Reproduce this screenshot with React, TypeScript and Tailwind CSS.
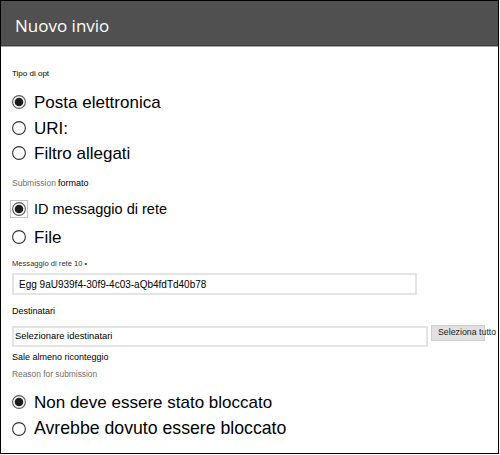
import React from "react";

const Radio: React.FC<{ checked?: boolean; focus?: boolean }> = ({ checked, focus }) => (
  <span
    className={
      "relative flex h-[14px] w-[14px] shrink-0 items-center justify-center " +
      (focus ? "outline outline-1 outline-[#c4c4c4] outline-offset-1" : "")
    }
  >
    <svg width="14" height="14" viewBox="0 0 14 14">
      <circle cx="7" cy="7" r="6.4" fill="#fff" stroke={checked ? "#5a5a5a" : "#333"} strokeWidth="1.1" />
      {checked && <circle cx="7" cy="7" r="4.3" fill="#1c1c1c" />}
    </svg>
  </span>
);

const Option: React.FC<{
  label: string;
  checked?: boolean;
  focus?: boolean;
  h: string;
  size: string;
}> = ({ label, checked, focus, h, size }) => (
  <label className={`flex items-center gap-[8px] ${h}`}>
    <Radio checked={checked} focus={focus} />
    <span className={`${size} leading-none text-black`}>{label}</span>
  </label>
);

export default function App() {
  return (
    <div
      className="w-[499px] h-[454px] border border-black bg-white overflow-hidden"
      style={{ fontFamily: '"Liberation Sans", Arial, sans-serif' }}
    >
      {/* header */}
      <div className="h-[45px] bg-[#505050] border-b border-[#3e3e3e] flex items-center pl-[14px] pt-[5px]">
        <h1
          className="text-[17px] text-white leading-none"
          style={{ fontFamily: '"Open Sans", "Noto Sans", sans-serif' }}
        >
          Nuovo invio
        </h1>
      </div>
      <div className="h-px bg-[#a6a6a6]" />

      <div className="pl-[11px] flex flex-col">
        <div className="mt-[21px] h-[12px] flex items-center text-[8px] text-black">Tipo di opt</div>

        <div className="mt-[9px] flex flex-col">
          <Option label="Posta elettronica" checked h="h-[26px]" size="text-[17px]" />
          <Option label="URI:" h="h-[26px]" size="text-[17px]" />
          <Option label="Filtro allegati" h="h-[24px]" size="text-[17px]" />
        </div>

        <div className="mt-[12px] h-[12px] flex items-center gap-[2px]">
          <span className="text-[8.5px] text-[#707070]">Submission</span>
          <span className="text-[9px] text-black relative top-[1px]">formato</span>
        </div>

        <div className="mt-[7px] flex flex-col">
          <Option label="ID messaggio di rete" checked focus h="h-[26px]" size="text-[14.5px]" />
          <Option label="File" h="h-[30px]" size="text-[17px]" />
        </div>

        <div className="mt-[6px] h-[12px] flex items-center text-[7.6px] text-[#333]">
          Messaggio di rete 10 •
        </div>
        <div className="mt-[3px] w-[405px] h-[22px] border-2 border-[#e4e4e4] flex items-center pl-[5px] text-[10px] text-black">
          Egg 9aU939f4-30f9-4c03-aQb4fdTd40b78
        </div>

        <div className="mt-[11px] h-[12px] flex items-center text-[9px] text-black">Destinatari</div>
        <div className="mt-[7px] flex items-start">
          <div className="mt-px w-[416px] h-[21px] border-2 border-[#e4e4e4] flex items-center pl-px text-[9.4px] text-black">
            Selezionare idestinatari
          </div>
          <button className="ml-[3px] w-[54px] h-[16px] bg-[#e1e1e1] border border-[#cfcfcf] flex items-center pl-[6px] text-[8.8px] text-[#1a1a1a] whitespace-nowrap overflow-visible">
            Seleziona tutto
          </button>
        </div>

        <div className="mt-[5px] h-[12px] flex items-center text-[9px] text-black">Sale almeno riconteggio</div>
        <div className="mt-[4px] h-[12px] flex items-center text-[8.4px] text-[#707070]">Reason for submission</div>

        <div className="mt-[9px] flex flex-col">
          <Option label="Non deve essere stato bloccato" checked h="h-[26px]" size="text-[17px]" />
          <Option label="Avrebbe dovuto essere bloccato" h="h-[28px]" size="text-[17.7px]" />
        </div>
      </div>
    </div>
  );
}
